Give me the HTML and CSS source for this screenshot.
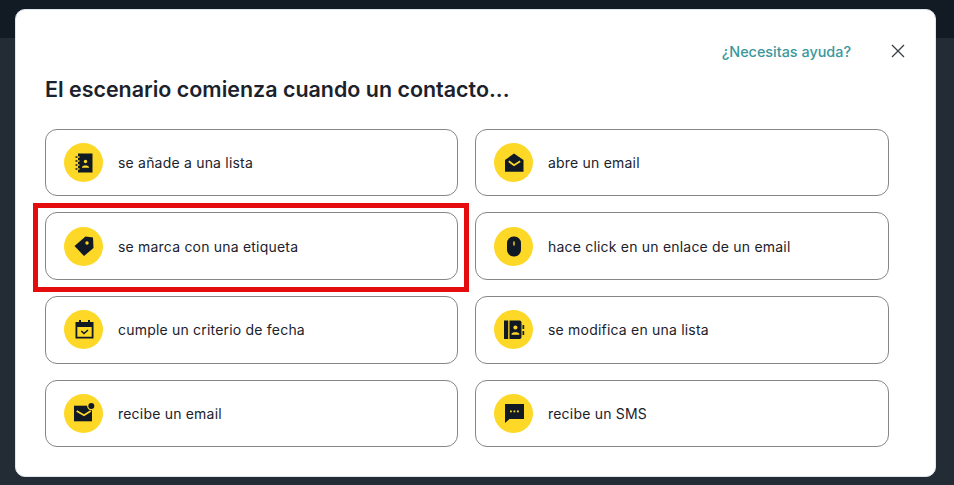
FILE: index.html
```html
<!DOCTYPE html>
<html lang="es">
<head>
    <meta charset="UTF-8">
    <title>Escenario</title>
    <link rel="stylesheet" href="styles.css">
</head>
<body>

<div class="topbar"></div>

<div class="modal">
    <div class="modal-top">
        <a class="help-link" href="#">¿Necesitas ayuda?</a>
        <button class="close-btn" aria-label="Cerrar">
            <svg width="14" height="14" viewBox="0 0 14 14"><path d="M1 1L13 13M13 1L1 13" stroke="#3a3f45" stroke-width="1.3" fill="none"/></svg>
        </button>
    </div>
    <h2 class="modal-title">El escenario comienza cuando un contacto...</h2>

    <div class="options">
        <div class="option">
            <span class="option-icon">
                <svg width="24" height="24" viewBox="0 0 24 24">
                    <path class="dark" d="M6 2.500H20.500V21.500H6V18.800H7.500V17.200H6V14.800H7.500V13.200H6V10.800H7.500V9.200H6V6.800H7.500V5.200H6Z"/>
                    <path class="dark" d="M3.500 5.200H5.500V6.800H3.500ZM3.500 9.200H5.500V10.800H3.500ZM3.500 13.200H5.500V14.800H3.500ZM3.500 17.200H5.500V18.800H3.500Z"/>
                    <circle class="light" cx="13.500" cy="10.500" r="1.700"/>
                    <path class="light" d="M10 16.200C10 14 17 14 17 16.200V16.800H10Z"/>
                </svg>
            </span>
            <span class="option-label">se añade a una lista</span>
        </div>
        <div class="option">
            <span class="option-icon">
                <svg width="24" height="24" viewBox="0 0 24 24">
                    <path class="dark" d="M3 9L12 2.500L21.500 9V20.700H3Z"/>
                    <path d="M6.800 10.300L12 14.200L18.200 10.300" fill="none" stroke="#fdd827" stroke-width="1.800"/>
                </svg>
            </span>
            <span class="option-label">abre un email</span>
        </div>
        <div class="option highlighted">
            <span class="option-icon">
                <svg width="24" height="24" viewBox="0 0 24 24">
                    <path class="dark" d="M2.500 12L13.500 2.500L21 3.500L21.500 14L12 22Z"/>
                    <circle class="light" cx="15" cy="9" r="1.700"/>
                </svg>
            </span>
            <span class="option-label">se marca con una etiqueta</span>
        </div>
        <div class="option">
            <span class="option-icon">
                <svg width="24" height="24" viewBox="0 0 24 24">
                    <rect class="dark" x="5" y="2.500" width="14" height="20" rx="6.500"/>
                    <rect class="light" x="11.300" y="7.500" width="1.400" height="4"/>
                </svg>
            </span>
            <span class="option-label">hace click en un enlace de un email</span>
        </div>
        <div class="option">
            <span class="option-icon">
                <svg width="24" height="24" viewBox="0 0 24 24">
                    <path class="dark" d="M3.500 4H7V2H9V4H16V2H18V4H21.500V20.500H3.500ZM5.300 9V18.700H19.700V9Z"/>
                    <path d="M9.300 13L12 15.500L16 12" fill="none" stroke="#111a24" stroke-width="1.600"/>
                </svg>
            </span>
            <span class="option-label">cumple un criterio de fecha</span>
        </div>
        <div class="option">
            <span class="option-icon">
                <svg width="24" height="24" viewBox="0 0 24 24">
                    <rect class="dark" x="2" y="2.500" width="4.200" height="18.500"/>
                    <path class="dark" d="M7.500 2.500H17.500A2 2 0 0 1 19.500 4.500V19A2 2 0 0 1 17.500 21H7.500Z"/>
                    <path class="dark" d="M20.500 7H22.200V11H20.500ZM20.500 13H22.200V17H20.500Z"/>
                    <circle class="light" cx="13.400" cy="9.500" r="2"/>
                    <path class="light" d="M9.500 16C9.500 13.500 17.300 13.500 17.300 16V16.700H9.500Z"/>
                </svg>
            </span>
            <span class="option-label">se modifica en una lista</span>
        </div>
        <div class="option">
            <span class="option-icon">
                <svg width="24" height="24" viewBox="0 0 24 24">
                    <path class="dark" d="M2 4.700H20V20.300H2Z"/>
                    <path d="M4.700 10L12 14.200L18.700 10" fill="none" stroke="#fdd827" stroke-width="1.800"/>
                    <circle class="light" cx="19.300" cy="5" r="4.200"/>
                    <circle class="dark" cx="19.300" cy="5" r="3"/>
                </svg>
            </span>
            <span class="option-label">recibe un email</span>
        </div>
        <div class="option">
            <span class="option-icon">
                <svg width="24" height="24" viewBox="0 0 24 24">
                    <path class="dark" d="M3 3H22V18H7.500L3 22Z"/>
                    <rect class="light" x="8" y="9.500" width="1.800" height="1.800"/>
                    <rect class="light" x="11.500" y="9.500" width="1.800" height="1.800"/>
                    <rect class="light" x="15" y="9.500" width="1.800" height="1.800"/>
                </svg>
            </span>
            <span class="option-label">recibe un SMS</span>
        </div>
    </div>
</div>

</body>
</html>
```

FILE: styles.css
```css
html, body {
    height: 100%;
}
body {
    margin: 0;
    overflow: hidden;
    background-color: #232b35;
    font-family: Inter, "Liberation Sans", sans-serif;
    color: #1b222c;
}
.topbar {
    height: 38px;
    background-color: #121a24;
}
.modal {
    position: absolute;
    top: 9px;
    left: 15px;
    width: 921px;
    height: 468px;
    box-sizing: border-box;
    padding: 26px 46px 0 29px;
    background-color: #fff;
    border: 1px solid #dfe6ee;
    border-radius: 10px;
}
.modal-top {
    display: flex;
    justify-content: flex-end;
    align-items: center;
    height: 30px;
    margin-right: -16px;
}
.help-link {
    font-size: 14.4px;
    font-weight: 500;
    color: #3b979c;
    text-decoration: none;
}
.close-btn {
    display: flex;
    width: 14px;
    height: 14px;
    margin-left: 40px;
    padding: 0;
    background: none;
    border: none;
    cursor: pointer;
}
.modal-title {
    margin: 8px 0 24.7px;
    font-size: 21.45px;
    line-height: 30px;
    font-weight: 600;
    color: #1b222c;
}
.options {
    display: grid;
    grid-template-columns: 413px 414px;
    column-gap: 17px;
    row-gap: 16px;
}
.option {
    position: relative;
    display: flex;
    align-items: center;
    height: 67.67px;
    box-sizing: border-box;
    padding-left: 18px;
    border: 1px solid #868686;
    border-radius: 12px;
}
.highlighted::after {
    content: "";
    position: absolute;
    top: -10px;
    left: -13px;
    right: -12px;
    bottom: -13px;
    border: 5px solid #e40c0c;
}
.option-icon {
    display: flex;
    align-items: center;
    justify-content: center;
    flex-shrink: 0;
    width: 39px;
    height: 39px;
    margin-right: 15px;
    background-color: #fdd827;
    border-radius: 50%;
}
.option-label {
    font-size: 14px;
    font-weight: 400;
    letter-spacing: 0.2px;
    color: #1b222c;
}
.dark {
    fill: #111a24;
}
.light {
    fill: #fdd827;
}
```
